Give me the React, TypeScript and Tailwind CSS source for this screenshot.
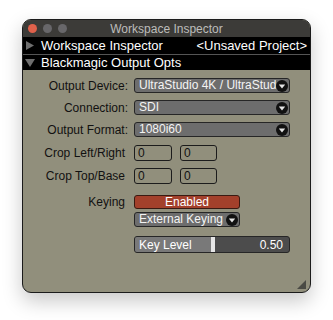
import React from 'react';

const font = { fontFamily: '"Liberation Sans", Arial, sans-serif' };

function DropIcon() {
  return (
    <svg width="12" height="12" viewBox="0 0 12 12" className="shrink-0">
      <circle cx="6" cy="6" r="6" fill="#111" />
      <path d="M2.8 4.4 L9.2 4.4 L6 8.4 Z" fill="#e4e4e4" />
    </svg>
  );
}

function Select({ value, width }: { value: string; width: string }) {
  return (
    <div
      className={`${width} h-[15px] flex items-center rounded-[3px] border border-[#262626] bg-[#6d6d6d] pl-[4px] pr-px overflow-hidden`}
    >
      <span className="flex-1 min-w-0 whitespace-nowrap overflow-hidden text-[12px] leading-[13px] text-[#f4f4f4]">
        {value}
      </span>
      <DropIcon />
    </div>
  );
}

function Row({ label, pr, children, className = '' }: { label: string; pr: string; children: React.ReactNode; className?: string }) {
  return (
    <div className={`flex items-center ${className}`}>
      <div className={`w-[111px] shrink-0 text-right text-[12px] leading-[14px] text-[#111] ${pr}`}>{label}</div>
      {children}
    </div>
  );
}

function Field({ value, width }: { value: string; width: string }) {
  return (
    <div className={`${width} h-[16px] rounded-[3px] border border-[#1c1c1c] pl-[3px] text-[12px] leading-[14px] text-[#111]`}>
      {value}
    </div>
  );
}

export default function App() {
  return (
    <div className="w-[333px] h-[320px] bg-white pt-[19px] pl-[22px]" style={font}>
      <div className="relative w-[289px] h-[274px] rounded-[9px] border border-[#1b1b1b] bg-[#918f7c] overflow-hidden shadow-[0_8px_20px_rgba(0,0,0,0.22)]">
        {/* title bar */}
        <div className="relative h-[17px] bg-[#3c3b38] flex items-center">
          <div className="flex items-center gap-[6px] pl-[5px]">
            <span className="w-[9px] h-[9px] rounded-full bg-[#e0614b]" />
            <span className="w-[9px] h-[9px] rounded-full bg-[#68676a]" />
            <span className="w-[9px] h-[9px] rounded-full bg-[#68676a]" />
          </div>
          <div className="absolute inset-0 flex items-center justify-center text-[12px] text-[#bdbdbb]">
            Workspace Inspector
          </div>
        </div>

        {/* headers */}
        <div className="h-[17px] bg-black flex items-center pl-[3px] pr-[3px] text-[13px] text-white">
          <svg width="8" height="9" viewBox="0 0 8 9" className="mr-[7px]">
            <path d="M0 0 L8 4.5 L0 9 Z" fill="#6e6e6e" />
          </svg>
          <span className="flex-1">Workspace Inspector</span>
          <span>&lt;Unsaved Project&gt;</span>
        </div>
        <div className="h-px bg-[#555]" />
        <div className="h-[15px] bg-black flex items-center pl-[2px] text-[13px] text-white">
          <svg width="10" height="8" viewBox="0 0 10 8" className="mr-[6px]">
            <path d="M0 0 L10 0 L5 8 Z" fill="#6e6e6e" />
          </svg>
          <span>Blackmagic Output Opts</span>
        </div>

        {/* body */}
        <div className="flex flex-col pt-[8px]">
          <Row label="Output Device:" pr="pr-[6px]">
            <Select value="UltraStudio 4K / UltraStudio" width="w-[156px]" />
          </Row>
          <Row label="Connection:" pr="pr-[6px]" className="mt-[7px]">
            <Select value="SDI" width="w-[156px]" />
          </Row>
          <Row label="Output Format:" pr="pr-[6px]" className="mt-[7px]">
            <Select value="1080i60" width="w-[156px]" />
          </Row>
          <Row label="Crop Left/Right" pr="pr-[9px]" className="mt-[8px]">
            <div className="flex gap-[8px]">
              <Field value="0" width="w-[38px]" />
              <Field value="0" width="w-[37px]" />
            </div>
          </Row>
          <Row label="Crop Top/Base" pr="pr-[9px]" className="mt-[7px]">
            <div className="flex gap-[8px]">
              <Field value="0" width="w-[38px]" />
              <Field value="0" width="w-[37px]" />
            </div>
          </Row>
          <Row label="Keying" pr="pr-[9px]" className="mt-[11px]">
            <div className="w-[106px] h-[14px] rounded-[3px] border border-[#3a1a12] bg-[#a3402b] flex items-center justify-center text-[12px] leading-[12px] text-white">
              Enabled
            </div>
          </Row>
          <div className="flex mt-[3px]">
            <div className="w-[111px] shrink-0" />
            <Select value="External Keying" width="w-[106px]" />
          </div>
          <div className="flex mt-[9px]">
            <div className="w-[111px] shrink-0" />
            <div className="relative w-[156px] h-[17px] rounded-[3px] border border-[#262626] bg-[#4c4c4c] overflow-hidden flex items-center">
              <div className="absolute left-0 top-0 bottom-0 w-[76px] bg-[#797979]" />
              <div className="absolute left-[76px] top-0 bottom-0 w-[4px] bg-[#e6e6e6]" />
              <span className="relative pl-[4px] flex-1 text-[12px] text-white">Key Level</span>
              <span className="relative pr-[6px] text-[12px] text-white">0.50</span>
            </div>
          </div>
        </div>

        {/* resize grip */}
        <svg width="9" height="9" viewBox="0 0 9 9" className="absolute right-[4px] bottom-[3px]">
          <path d="M9 0 L9 9 L0 9 Z" fill="#4a4a44" />
        </svg>
      </div>
    </div>
  );
}
